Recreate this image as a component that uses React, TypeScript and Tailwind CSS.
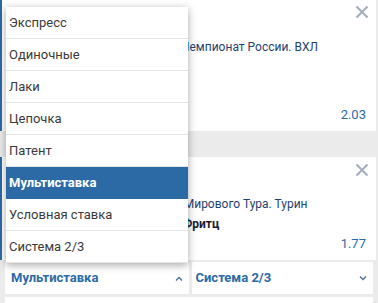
import React from 'react';

const betTypes = ['Экспресс', 'Одиночные', 'Лаки', 'Цепочка', 'Патент', 'Мультиставка', 'Условная ставка', 'Система 2/3'];

const CloseIcon = () => (
    <svg width="14" height="14" viewBox="0 0 14 14" fill="none">
        <path d="M1.5 1.5L12.5 12.5M12.5 1.5L1.5 12.5" stroke="#a3adbd" strokeWidth="2" />
    </svg>
);

const Chevron = ({ up }: { up?: boolean }) => (
    <svg width="8" height="5" viewBox="0 0 8 5" fill="none">
        <path d={up ? 'M1 4.5L4 1.5L7 4.5' : 'M1 0.5L4 3.5L7 0.5'} stroke="#4a6f9c" strokeWidth="1.3" />
    </svg>
);

const App = () => {
    const selected = 'Мультиставка';

    return (
        <div className="relative w-[378px] h-[303px] overflow-hidden bg-[#ebebeb] font-['Roboto',sans-serif]">
            {/* купон 1 */}
            <div className="relative mr-[2px] h-[131px] bg-white border-l-2 border-[#2b6aa5] pl-[77px] pr-[10px] pt-[17px] text-[12px] leading-[20px]">
                <button className="absolute top-[5px] right-[7px]"><CloseIcon /></button>
                <div className="whitespace-nowrap text-[#222]">Сокол — Химик</div>
                <div className="whitespace-nowrap text-[#1f3f73]">Хоккей — Россия. Чемпионат России. ВХЛ</div>
                <div className="whitespace-nowrap font-bold text-[#1a1a2e]">П1</div>
                <div className="whitespace-nowrap text-[#555]">Основное время</div>
                <div className="mt-[8px] flex justify-end text-[13px] text-[#2b6aa5]">2.03</div>
            </div>

            {/* купон 2 */}
            <div className="relative mt-[26px] mr-[2px] h-[103px] bg-white border-l-2 border-[#2b6aa5] pl-[70px] pr-[10px] pt-[17px] text-[12px] leading-[20px]">
                <button className="absolute top-[6px] right-[7px]"><CloseIcon /></button>
                <div className="whitespace-nowrap text-[#222]">Синнер — Фритц</div>
                <div className="whitespace-nowrap text-[#1f3f73]">Теннис. ATP. Финал Мирового Тура. Турин</div>
                <div className="whitespace-nowrap font-bold text-[#1a1a2e]">Победа П2: Тейлор Фритц</div>
                <div className="flex justify-end text-[13px] text-[#2b6aa5]">1.77</div>
            </div>

            {/* выбор типа ставки */}
            <div className="mt-[2px] flex gap-[3px] px-[5px]">
                <div className="flex h-[32px] flex-1 items-center justify-between bg-white pl-[6px] pr-[6px] text-[13px] font-bold text-[#2b6aa5]">
                    <span>Мультиставка</span>
                    <Chevron up />
                </div>
                <div className="flex h-[32px] flex-1 items-center justify-between bg-white pl-[4px] pr-[6px] text-[13px] font-bold text-[#2b6aa5]">
                    <span>Система 2/3</span>
                    <Chevron />
                </div>
            </div>
            <div className="mx-[5px] mt-[3px] h-[20px] bg-white" />

            {/* выпадающий список */}
            <div className="absolute left-[6px] top-[7px] w-[182px] bg-white shadow-[0_2px_8px_rgba(0,0,0,0.35)]">
                {betTypes.map((type) => (
                    <div
                        key={type}
                        className={
                            type === selected
                                ? 'flex h-[32px] items-center bg-[#2b6aa5] pl-[3px] text-[13px] font-bold text-white'
                                : 'flex h-[32px] items-center border-b border-[#e4e4e4] pl-[3px] text-[13px] text-[#3a3a3a]'
                        }
                    >
                        {type}
                    </div>
                ))}
            </div>
        </div>
    );
};

export default App;
